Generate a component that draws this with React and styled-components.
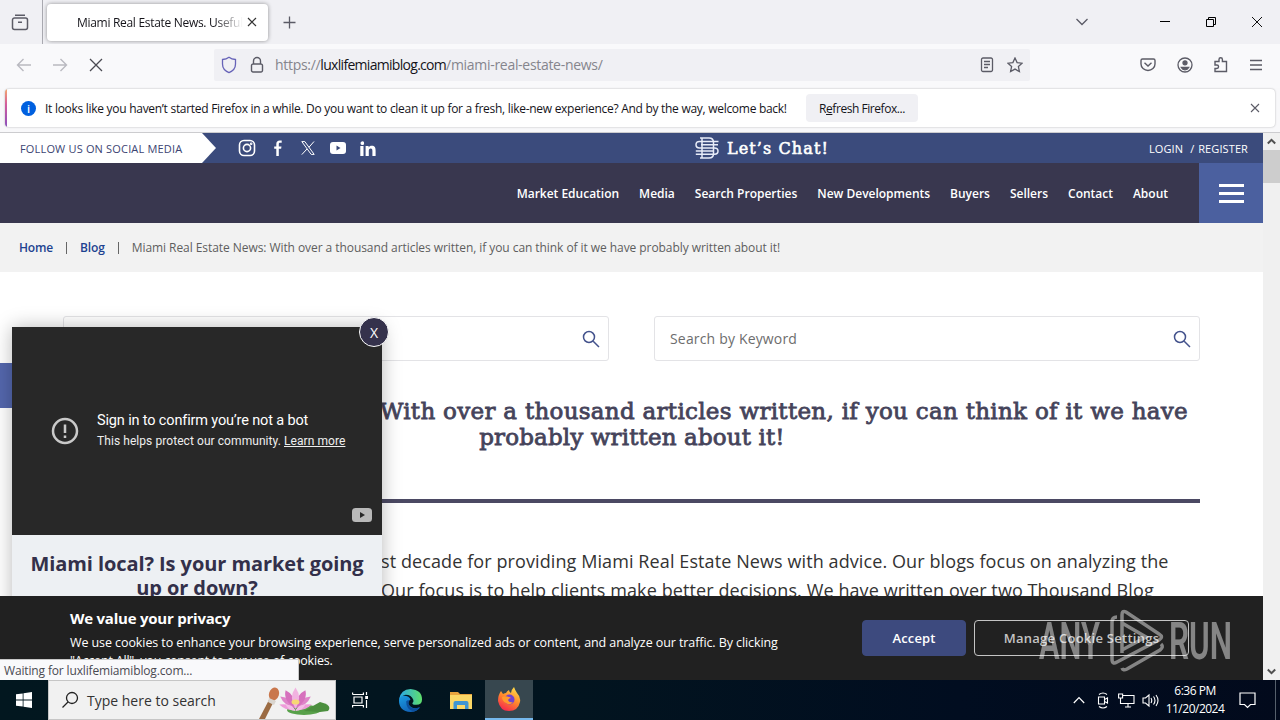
import { useState } from "react";
import styled, { createGlobalStyle, css } from "styled-components";

const NAV = ["Market Education", "Media", "Search Properties", "New Developments", "Buyers", "Sellers", "Contact", "About"];

function TitleBar() {
    return (
        <TitleRow>
            <ViewButton>
                <Svg width="18" height="18" viewBox="0 0 18 18">
                    <path d="M4 2.2h10M3.5 5h11a2 2 0 0 1 2 2v7.500a2 2 0 0 1-2 2h-11a2 2 0 0 1-2-2V7a2 2 0 0 1 2-2zM7 9.200h4" />
                </Svg>
            </ViewButton>
            <BrowserTab>
                <TabTitle>Miami Real Estate News. Useful</TabTitle>
                <Svg width="10" height="10" viewBox="0 0 10 10" $color="#333" $w={1.2}>
                    <path d="M1 1l8 8M9 1l-8 8" />
                </Svg>
            </BrowserTab>
            <NewTab>
                <Svg width="13" height="13" viewBox="0 0 13 13" $w={1.3}>
                    <path d="M6.500 .5v12M.5 6.500h12" />
                </Svg>
            </NewTab>
            <WindowButtons>
                <Svg width="14" height="8" viewBox="0 0 14 8" $w={1.3}>
                    <path d="M1.500 1l5.500 5.500L12.500 1" />
                </Svg>
                <Svg width="10" height="10" viewBox="0 0 10 10" $color="#000" $w={1}>
                    <path d="M0 4.500h10" />
                </Svg>
                <Svg width="10" height="10" viewBox="0 0 10 10" $color="#000" $w={1}>
                    <path d="M.5 2.500h7v7h-7zM2.500 2.500v-2h7v7h-2" />
                </Svg>
                <Svg width="10" height="10" viewBox="0 0 10 10" $color="#111" $w={1}>
                    <path d="M0 0l10 10M10 0L0 10" />
                </Svg>
            </WindowButtons>
        </TitleRow>
    );
}

function ToolBar() {
    return (
        <ToolRow>
            <NavIcons>
                <Svg width="16" height="14" viewBox="0 0 16 14" $color="#b9b9c0" $w={1.4}>
                    <path d="M15 7H1.500M7.500 1l-6 6 6 6" />
                </Svg>
                <Svg width="16" height="14" viewBox="0 0 16 14" $color="#b9b9c0" $w={1.4}>
                    <path d="M1 7h13.500M8.500 1l6 6-6 6" />
                </Svg>
                <Svg width="16" height="14" viewBox="0 0 16 14" $color="#4a4a52" $w={1.3}>
                    <path d="M2 1l12 12M14 1L2 13" />
                </Svg>
            </NavIcons>
            <UrlBar>
                <Svg width="16" height="18" viewBox="0 0 16 18" $color="#6763b8" $w={1.3}>
                    <path d="M8 1.200C6 2.700 4 3.300 1.500 3.500v4.500c0 4 2.500 7 6.500 8.600 4-1.600 6.500-4.600 6.500-8.600V3.500C12 3.300 10 2.700 8 1.200z" />
                </Svg>
                <Svg width="14" height="18" viewBox="0 0 14 18" $w={1.4}>
                    <path d="M3 8h8a1.500 1.500 0 0 1 1.500 1.500v5A1.500 1.500 0 0 1 11 16H3a1.500 1.500 0 0 1-1.500-1.500v-5A1.500 1.500 0 0 1 3 8zM3.500 8V5a3.500 3.500 0 0 1 7 0v3" />
                </Svg>
                <Url>
                    https://<b>luxlifemiamiblog.com</b>/miami-real-estate-news/
                </Url>
                <Svg width="14" height="16" viewBox="0 0 14 16" $w={1.3}>
                    <path d="M3 1h8a1.500 1.500 0 0 1 1.500 1.500v10.500A1.500 1.500 0 0 1 11 14.500H3A1.500 1.500 0 0 1 1.500 13V2.500A1.500 1.500 0 0 1 3 1zM4 4.500h6M4 7.500h6M4 10.500h4" />
                </Svg>
                <Svg width="16" height="16" viewBox="0 0 16 16" $w={1.3}>
                    <path d="M8 1l2.100 4.600 5 .6-3.700 3.400 1 4.900L8 12.100l-4.400 2.400 1-4.900L.9 6.200l5-.6z" />
                </Svg>
            </UrlBar>
            <ToolIcons>
                <Svg width="16" height="16" viewBox="0 0 16 16" $w={1.4}>
                    <path d="M2.500 2h11A1.500 1.500 0 0 1 15 3.500V7A7 6.500 0 0 1 1 7V3.500A1.500 1.500 0 0 1 2.500 2zM4.500 5.800L8 9l3.500-3.200" />
                </Svg>
                <Svg width="16" height="16" viewBox="0 0 16 16" $w={1.3}>
                    <circle cx="8" cy="8" r="7" />
                    <circle cx="8" cy="5.800" r="2" fill="#5b5b66" />
                    <path d="M4.300 10.500h7.400q-1.200 2.300-3.700 2.300t-3.700-2.300z" fill="#5b5b66" />
                </Svg>
                <Svg width="16" height="16" viewBox="0 0 16 16" $w={1.4}>
                    <path d="M2 4.500h4V2.500a1.700 1.700 0 0 1 3.400 0v2h4.100V14.500H2v-3h1.800a1.700 1.700 0 0 0 0-3.500H2z" />
                </Svg>
                <Svg width="14" height="12" viewBox="0 0 14 12" $w={1.3}>
                    <path d="M1 1.500h12M1 6h12M1 10.500h12" />
                </Svg>
            </ToolIcons>
        </ToolRow>
    );
}

function Notification() {
    return (
        <NoticeArea>
            <Notice>
                <InfoDot>i</InfoDot>
                <NoticeText>
                    It looks like you haven’t started Firefox in a while. Do you want to clean it up for a fresh, like-new experience? And by the way, welcome back!
                </NoticeText>
                <RefreshButton>
                    R<u>e</u>fresh Firefox...
                </RefreshButton>
                <Svg width="10" height="10" viewBox="0 0 10 10" $w={1.1}>
                    <path d="M1 1l8 8M9 1L1 9" />
                </Svg>
            </Notice>
        </NoticeArea>
    );
}

function SiteHeader() {
    return (
        <>
            <TopBar>
                <Follow>FOLLOW US ON SOCIAL MEDIA</Follow>
                <Socials>
                    <Svg width="18" height="18" viewBox="0 0 18 18" $color="#fff" $w={1.6}>
                        <rect x="1.500" y="1.500" width="15" height="15" rx="4.500" />
                        <circle cx="9" cy="9" r="3.600" />
                        <circle cx="13.200" cy="4.800" r=".5" />
                    </Svg>
                    <Svg width="10" height="16" viewBox="0 0 10 16" $color="none">
                        <path fill="#fff" d="M3.300 16V8.700H1.200V6.400h2.100V4c0-2.400 1.300-3.600 3.500-3.600l1.900.1v2.200H7.300C6.200 2.700 5.800 3.200 5.800 4v2.400h2.700l-.4 2.300H5.800V16z" />
                    </Svg>
                    <Svg width="14" height="14" viewBox="0 0 14 14" $color="#fff" $w={1}>
                        <path d="M.8.6h3l9.400 12.800h-3zM13 .5L8 6.200M6 8l-5.200 5.600" />
                    </Svg>
                    <Svg width="16" height="12" viewBox="0 0 16 12" $color="none">
                        <rect width="16" height="12" rx="3" fill="#fff" />
                        <path fill="#3b4a7a" d="M6.500 3.500v5L10.500 6z" />
                    </Svg>
                    <Svg width="16" height="15" viewBox="0 0 16 15" $color="none">
                        <path fill="#fff" d="M.3 5h3.200v10H.3zM1.900.4a1.800 1.800 0 1 1 0 3.500 1.800 1.800 0 0 1 0-3.500zM5.600 5h3v1.400c.6-1 1.700-1.700 3.100-1.700 3.100 0 3.900 2 3.900 4.800V15h-3.200v-4.900c0-1.300-.2-2.500-1.700-2.500s-1.900 1.100-1.900 2.500V15H5.600z" />
                    </Svg>
                </Socials>
                <Chat>
                    <Svg width="24" height="22" viewBox="0 0 24 22" $color="#e8ecf8" $w={1.5}>
                        <path d="M23.500 4.500H4.500Q1 4.500 1 7.700t3.500 3.200h15q3.500 0 3.500 3.200t-3.500 3.200H.8M.8 14h18M6 7.700h17M5 1h9q4.500 0 4.500 4.500v11q0 4.500-4.500 4.500H5M7 1v20" />
                    </Svg>
                    <span>Let’s Chat!</span>
                </Chat>
                <Login>
                    <span>LOGIN</span>
                    <span>/ REGISTER</span>
                </Login>
            </TopBar>
            <NavBar>
                {NAV.map((item) => (
                    <NavItem key={item}>{item}</NavItem>
                ))}
                <Burger>
                    <i />
                    <i />
                    <i />
                </Burger>
            </NavBar>
            <Crumbs>
                <CrumbLink>Home</CrumbLink>
                <CrumbSep />
                <CrumbLink>Blog</CrumbLink>
                <CrumbSep />
                <CrumbText>Miami Real Estate News: With over a thousand articles written, if you can think of it we have probably written about it!</CrumbText>
            </Crumbs>
        </>
    );
}

function SearchIcon() {
    return (
        <Svg width="18" height="18" viewBox="0 0 18 18" $color="#43528c" $w={1.5}>
            <circle cx="7" cy="7" r="5.500" />
            <path d="M11.200 11.200L17 17" />
        </Svg>
    );
}

function VideoPopup({ onClose }) {
    return (
        <Popup>
            <CloseButton onClick={onClose}>X</CloseButton>
            <Video>
                <VideoMessage>
                    <Svg width="28" height="28" viewBox="0 0 28 28" $color="#c9c9c9" $w={2.500}>
                        <circle cx="14" cy="14" r="12" />
                        <path d="M14 7.500v8.500M14 18.500v2.500" />
                    </Svg>
                    <div>
                        <VideoTitle>Sign in to confirm you’re not a bot</VideoTitle>
                        <VideoSub>
                            This helps protect our community. <u>Learn more</u>
                        </VideoSub>
                    </div>
                </VideoMessage>
                <YtMark>
                    <Svg width="20" height="14" viewBox="0 0 20 14" $color="none">
                        <rect width="20" height="14" rx="3.500" fill="#b9b9b9" />
                        <path fill="#282828" d="M8 4v6l5-3z" />
                    </Svg>
                </YtMark>
            </Video>
            <PopupTitle>
                Miami local? Is your market going
                <br />
                up or down?
            </PopupTitle>
        </Popup>
    );
}

function CookieBanner() {
    return (
        <Cookie>
            <CookieCopy>
                <CookieTitle>We value your privacy</CookieTitle>
                <CookieText $ls={-0.088}>
                    We use cookies to enhance your browsing experience, serve personalized ads or content, and analyze our traffic. By clicking
                </CookieText>
                <CookieText $ls={-0.19}>"Accept All", you consent to our use of cookies.</CookieText>
            </CookieCopy>
            <CookieButton $primary>Accept</CookieButton>
            <CookieButton>Manage Cookie Settings</CookieButton>
        </Cookie>
    );
}

function Watermark() {
    return (
        <WatermarkSvg width="200" height="64" viewBox="0 0 200 64">
            <g fill="#fff" fontFamily="Roboto, sans-serif" fontSize="52" fontWeight="600">
                <text x="1" y="50" textLength="61" lengthAdjust="spacingAndGlyphs">ANY</text>
                <text x="131" y="50" textLength="63" lengthAdjust="spacingAndGlyphs">RUN</text>
            </g>
            <path
                d="M79 8q-5 0-5 5v37q0 6 5 3l42-22q5-3 0-6L88 3q-4-2-4 3v38M84 14l24 14-24 13M84 59q1 3 5 1l33-19q4-3 1-6"
                fill="none"
                stroke="#fff"
                strokeWidth="3.500"
            />
        </WatermarkSvg>
    );
}

function TaskBar() {
    return (
        <Tasks>
            <TaskButton>
                <Svg width="16" height="16" viewBox="0 0 16 16" $color="none">
                    <path fill="#fff" d="M0 2.300L6.700 1.400v6.200H0zM7.500 1.300L16 0v7.600H7.500zM0 8.400h6.700v6.200L0 13.700zM7.500 8.400H16V16l-8.500-1.300z" />
                </Svg>
            </TaskButton>
            <TaskSearch>
                <Svg width="18" height="18" viewBox="0 0 18 18" $color="#222" $w={1.3}>
                    <circle cx="11" cy="7" r="5.500" />
                    <path d="M7 11l-5.500 5.500" />
                </Svg>
                <span>Type here to search</span>
                <Svg width="72" height="38" viewBox="0 0 72 38" $color="none">
                    <path d="M16 18L6 38H0L11 17z" fill="#9b6b43" />
                    <ellipse cx="15" cy="13" rx="5" ry="6.500" transform="rotate(18 15 13)" fill="#c9774c" />
                    <path d="M10 17l7 3-2 4-6-3z" fill="#d9d5cf" />
                    <ellipse cx="45" cy="29" rx="17" ry="5" fill="#58a14a" />
                    <path d="M45 30l16-9q13 3 8 9l-8 1z" fill="#4b8f3e" />
                    <g fill="#df84c9" transform="translate(.5 2) scale(.9)">
                        <path d="M40 28q-13-3-17-13 12 1 17 13zM40 28q13-3 17-13-12 1-17 13z" />
                        <path d="M40 28Q26 20 29 8q11 5 11 20zM40 28q14-8 11-20-11 5-11 20z" fill="#d670bd" />
                        <path d="M40 29q-8-13 0-24 8 11 0 24z" fill="#f1b2e0" />
                        <path d="M40 30q-11 1-18-6 11-2 18 6zM40 30q11 1 18-6-11-2-18 6z" fill="#ee9bd9" />
                        <path d="M40 31q-8 0-11-7 8 0 11 7zM40 31q8 0 11-7-8 0-11 7z" fill="#f4bce6" />
                    </g>
                    <ellipse cx="36.500" cy="21" rx="4" ry="2.500" fill="#f7d774" />
                </Svg>
            </TaskSearch>
            <TaskButton>
                <Svg width="17" height="16" viewBox="0 0 17 16" $color="#fff" $w={1.2}>
                    <path d="M.6 2.500V.6M.6 2.500h10.800V.6M2 5h8v6H2zM.6 15.500v-2h10.800v2M14.500 0v3M14.500 8v8" />
                    <path d="M13.200 4h2.800v3h-2.800z" fill="#fff" stroke="none" />
                </Svg>
            </TaskButton>
            <TaskButton $wide>
                <Svg width="25" height="25" viewBox="0 0 26 26" $color="none">
                    <defs>
                        <linearGradient id="edgeTop" x1="0" x2="1">
                            <stop offset="0" stopColor="#2aa7e8" />
                            <stop offset="1" stopColor="#5fe06b" />
                        </linearGradient>
                        <linearGradient id="edgeBody" x1="0" y1="0" x2=".6" y2="1">
                            <stop offset="0" stopColor="#1b9de2" />
                            <stop offset="1" stopColor="#1160b5" />
                        </linearGradient>
                    </defs>
                    <path d="M1 13Q1 8 6 8q6 0 7 4-3 2-2 5 3 5 9 4l3-1q-3 5-10 5Q1 24 1 13z" fill="url(#edgeBody)" />
                    <path d="M1 12Q3 1 13 1q12 1 12 11 0 5.500-6 5.500-4.500 0-4-2 1.500-1 1-3Q14 7 8 7q-5 1-7 5z" fill="url(#edgeTop)" />
                    <path d="M8.500 14q0 9 8 10.500 4-1 6-4.500-8 3-11-1.500-1.500-3 .5-5.500-2-1-3.500 1z" fill="#0c4f9c" />
                </Svg>
            </TaskButton>
            <TaskButton>
                <Svg width="22" height="19" viewBox="0 0 22 19" $color="none">
                    <path d="M0 1h8l2 2h12v4H0z" fill="#e8a33d" />
                    <path d="M0 4h22v14H0z" fill="#fbd766" />
                    <path d="M3.500 18v-6q0-2 2-2h11q2 0 2 2v6H15v-4H7v4z" fill="#3f95d1" />
                </Svg>
            </TaskButton>
            <TaskButton $active>
                <Svg width="24" height="24" viewBox="0 0 24 24" $color="none">
                    <defs>
                        <linearGradient id="fox" x1=".8" y1="0" x2=".3" y2="1">
                            <stop offset="0" stopColor="#ffe14a" />
                            <stop offset=".5" stopColor="#ff8a2c" />
                            <stop offset="1" stopColor="#f5274e" />
                        </linearGradient>
                    </defs>
                    <path d="M4 4l2 3q2-1 3-1 1-2 3-3 0 2 2 3 0-3 3-6 1 3 3 6 4 4 3 9-2 9-11 9T1 14Q1 8 4 4z" fill="url(#fox)" />
                    <circle cx="12.500" cy="12.500" r="5" fill="#7142cf" />
                    <path d="M5 10q4-2 9 1-2 0-3 2 1 3 5 2-3 4-7 1-4-2-4-6z" fill="#ff9a2e" />
                </Svg>
            </TaskButton>
            <Tray>
                <Svg width="12" height="8" viewBox="0 0 12 8" $color="#fff" $w={1.2}>
                    <path d="M.8 7L6 1.500 11.200 7" />
                </Svg>
                <Svg width="12" height="17" viewBox="0 0 12 17" $color="#fff" $w={1.1}>
                    <path d="M1.500 5h6v7h-6zM7.500 7.500L10.500 6v5l-3-1.500M2 2.500q4-3 8 0M2 14.500q4 3 8 0" />
                </Svg>
                <Svg width="17" height="15" viewBox="0 0 17 15" $color="#fff" $w={1.1}>
                    <path d="M5 2.500h11v8H5M10 10.500V14M7 14h6M.6 1h4v4h-4zM2.500 5v5.500h3" />
                </Svg>
                <Svg width="17" height="15" viewBox="0 0 17 15" $color="#fff" $w={1.1}>
                    <path d="M1 5h2.500L7 2v11l-3.500-3H1zM9 5q1.500 2.500 0 5M11.500 3.500q3 4 0 8M14 2q4 5.500 0 11" />
                </Svg>
            </Tray>
            <Clock>
                <span>6:36 PM</span>
                <span>11/20/2024</span>
            </Clock>
            <Svg width="17" height="17" viewBox="0 0 17 17" $color="#fff" $w={1.2}>
                <path d="M1 1h15v11.500h-4.500L8.500 15.500l-3-3H1z" />
            </Svg>
            <DesktopEdge />
        </Tasks>
    );
}

function App() {
    const [popupOpen, setPopupOpen] = useState(true);

    return (
        <Screen>
            <GlobalStyle />
            <TitleBar />
            <ToolBar />
            <Notification />
            <Viewport>
                <Page>
                    <SiteHeader />
                    <Content>
                        <SearchRow>
                            <SearchField>
                                <span />
                                <SearchIcon />
                            </SearchField>
                            <SearchField>
                                <span>Search by Keyword</span>
                                <SearchIcon />
                            </SearchField>
                        </SearchRow>
                        <Heading>
                            <HeadingLine $right>With over a thousand articles written, if you can think of it we have</HeadingLine>
                            <HeadingLine>probably written about it!</HeadingLine>
                        </Heading>
                        <Article>
                            <ArticleLine>st decade for providing Miami Real Estate News with advice. Our blogs focus on analyzing the</ArticleLine>
                            <ArticleLine>Our focus is to help clients make better decisions. We have written over two Thousand Blog</ArticleLine>
                        </Article>
                    </Content>
                    <SideTab />
                    {popupOpen && <VideoPopup onClose={() => setPopupOpen(false)} />}
                    <CookieBanner />
                    <Watermark />
                    <StatusBar>Waiting for luxlifemiamiblog.com...</StatusBar>
                </Page>
                <ScrollBar>
                    <Svg width="9" height="17" viewBox="0 0 9 17" $color="#505050" $w={2}>
                        <path d="M.8 10.500l3.700-3.700 3.700 3.700" />
                    </Svg>
                    <Thumb />
                    <Svg width="9" height="17" viewBox="0 0 9 17" $color="#505050" $w={2}>
                        <path d="M.8 6.500l3.700 3.700 3.700-3.700" />
                    </Svg>
                </ScrollBar>
            </Viewport>
            <TaskBar />
        </Screen>
    );
}

export default App;

const GlobalStyle = createGlobalStyle`
    * {
        box-sizing: border-box;
    }

    body {
        margin: 0;
        overflow: hidden;
        font-family: "Open Sans", "Noto Sans", sans-serif;
    }
`;

const Svg = styled.svg`
    flex: none;
    display: block;
    fill: none;
    stroke: ${(props) => props.$color || "#5b5b66"};
    stroke-width: ${(props) => props.$w || 1.5};
`;

const Screen = styled.div`
    display: flex;
    flex-direction: column;
    width: 1280px;
    height: 720px;
    overflow: hidden;
    white-space: nowrap;
`;

const TitleRow = styled.div`
    display: flex;
    align-items: center;
    height: 44px;
    background: #f0f0f4;
`;

const ViewButton = styled.div`
    display: flex;
    align-items: center;
    width: 43px;
    height: 44px;
    padding-left: 11px;
    border-right: 1px solid #a9a9b0;
`;

const BrowserTab = styled.div`
    display: flex;
    align-items: center;
    justify-content: space-between;
    width: 221px;
    height: 37px;
    margin-left: 4px;
    padding: 0 11px 0 30px;
    background: #fff;
    border-radius: 4px;
    box-shadow: 0 0 4px rgba(0, 0, 0, 0.4);
`;

const TabTitle = styled.span`
    width: 166px;
    overflow: hidden;
    font-size: 12px;
    letter-spacing: -0.3px;
    color: #15141a;
    mask-image: linear-gradient(to left, transparent, #000 28px);
`;

const NewTab = styled.div`
    padding-left: 15px;
`;

const WindowButtons = styled.div`
    display: flex;
    align-items: center;
    gap: 36px;
    margin-left: auto;
    padding-right: 18px;

    svg:first-child {
        margin-right: 35px;
    }
`;

const ToolRow = styled.div`
    display: flex;
    align-items: center;
    height: 44px;
    padding-bottom: 3px;
    background: #f9f9fb;
`;

const NavIcons = styled.div`
    display: flex;
    align-items: center;
    gap: 20px;
    width: 214px;
    padding-left: 16px;
`;

const UrlBar = styled.div`
    display: flex;
    align-items: center;
    width: 816px;
    height: 32px;
    padding: 0 7px;
    background: #f0f0f4;
    border-radius: 2px;

    svg:nth-child(2) {
        margin-left: 13px;
    }

    svg:last-child {
        margin-left: 13px;
    }
`;

const Url = styled.span`
    flex: 1;
    margin-left: 11px;
    font-size: 14px;
    letter-spacing: -0.3px;
    color: #85858d;

    b {
        font-weight: 400;
        letter-spacing: -0.7px;
        color: #15141a;
    }
`;

const ToolIcons = styled.div`
    display: flex;
    align-items: center;
    gap: 20px;
    margin-left: auto;
    padding-right: 17px;

    svg:first-child {
        margin-right: 1px;
    }
`;

const NoticeArea = styled.div`
    height: 45px;
    padding: 1px 5px 0;
    background: #f8f8fa;
    border-bottom: 1px solid #cccccf;
`;

const Notice = styled.div`
    display: flex;
    align-items: center;
    height: 38px;
    padding-right: 15px;
    background: linear-gradient(#f5a86c, #d35c9c 40%, #8a4fbd) left / 2px 100% no-repeat #fff;
    border-radius: 4px;
    box-shadow: 0 0 2px rgba(0, 0, 0, 0.3);

    > svg {
        margin-left: auto;
    }
`;

const InfoDot = styled.span`
    width: 15px;
    height: 15px;
    margin-left: 16px;
    border-radius: 50%;
    background: #0060df;
    color: #fff;
    font-size: 11px;
    font-weight: 600;
    line-height: 15px;
    text-align: center;
`;

const NoticeText = styled.span`
    width: 761px;
    margin-left: 9px;
    padding-top: 1px;
    font-size: 12px;
    letter-spacing: -0.284px;
    color: #15141a;
`;

const RefreshButton = styled.span`
    width: 112px;
    height: 28px;
    background: #f0f0f4;
    border-radius: 4px;
    font-size: 12px;
    letter-spacing: -0.45px;
    line-height: 30px;
    text-align: center;
    color: #15141a;
`;

const Viewport = styled.div`
    display: flex;
    height: 547px;
`;

const Page = styled.div`
    position: relative;
    width: 1263px;
    height: 547px;
    overflow: hidden;
    background: #fff;
`;

const TopBar = styled.div`
    display: flex;
    align-items: center;
    height: 30px;
    padding-right: 15px;
    background: #3b4b7c;
    color: #fff;
`;

const Follow = styled.div`
    width: 216px;
    height: 30px;
    padding-left: 20px;
    background: #fff;
    clip-path: polygon(0 0, 202px 0, 216px 15px, 202px 100%, 0 100%);
    font-size: 11px;
    letter-spacing: 0.17px;
    line-height: 32px;
    color: #3b4472;
`;

const Socials = styled.div`
    display: flex;
    align-items: center;
    width: 479px;
    padding-left: 22px;

    svg:nth-child(2) {
        margin-left: 17px;
    }

    svg:nth-child(3) {
        margin-left: 18px;
    }

    svg:nth-child(4) {
        margin-left: 15px;
    }

    svg:nth-child(5) {
        margin-left: 14px;
    }
`;

const Chat = styled.div`
    display: flex;
    align-items: center;
    gap: 8px;
    font-family: "DejaVu Serif", serif;
    font-size: 16px;
    letter-spacing: 1.1px;
    -webkit-text-stroke: 0.6px #fff;
`;

const Login = styled.div`
    display: flex;
    gap: 7px;
    margin-left: auto;
    font-size: 11px;
    letter-spacing: 0.1px;
    word-spacing: 1px;
`;

const NavBar = styled.div`
    display: flex;
    align-items: center;
    justify-content: flex-end;
    gap: 20px;
    height: 60px;
    background: #39374f;
`;

const NavItem = styled.span`
    font-size: 12px;
    font-weight: 600;
    letter-spacing: -0.01px;
    color: #fff;
`;

const Burger = styled.div`
    display: flex;
    flex-direction: column;
    align-items: center;
    justify-content: center;
    gap: 5px;
    width: 64px;
    height: 60px;
    margin-left: 11px;
    background: #4b609f;

    i {
        width: 25px;
        height: 3px;
        background: #fff;
    }
`;

const Crumbs = styled.div`
    display: flex;
    align-items: center;
    height: 49px;
    padding-left: 19px;
    background: #f2f2f2;
    font-size: 12px;
`;

const CrumbLink = styled.span`
    font-weight: 600;
    letter-spacing: -0.15px;
    color: #1d4290;
`;

const CrumbSep = styled.i`
    width: 1px;
    height: 12px;
    margin: 0 13px;
    background: #666;
`;

const CrumbText = styled.span`
    color: #5e5e5e;
    letter-spacing: -0.065px;
`;

const Content = styled.div`
    padding: 44px 63px 0;
`;

const SearchRow = styled.div`
    display: grid;
    grid-template-columns: 546px 546px;
    gap: 45px;
`;

const SearchField = styled.div`
    display: flex;
    align-items: center;
    justify-content: space-between;
    height: 45px;
    padding: 0 8px 0 15px;
    border: 1px solid #e3e3e6;
    border-radius: 3px;
    font-size: 14px;
    letter-spacing: 0.17px;
    color: #6d6d6d;
`;

const Heading = styled.h1`
    height: 142px;
    margin: 0;
    padding-top: 37px;
    border-bottom: 4px solid #4b4963;
    font-family: "DejaVu Serif", serif;
    font-size: 23px;
    font-weight: 400;
    line-height: 26px;
    color: #45435a;
    -webkit-text-stroke: 0.8px #45435a;
`;

const HeadingLine = styled.div`
    padding-left: ${(props) => (props.$right ? 0 : 1)}px;
    padding-right: ${(props) => (props.$right ? 12 : 0)}px;
    text-align: ${(props) => (props.$right ? "right" : "center")};
    letter-spacing: ${(props) => (props.$right ? 0.29 : 0.13)}px;
`;

const Article = styled.div`
    padding: 44px 0 0 318px;
`;

const ArticleLine = styled.p`
    margin: 0;
    font-size: 18px;
    line-height: 29px;
    letter-spacing: 0.095px;
    color: #333;
`;

const SideTab = styled.div`
    position: absolute;
    left: 0;
    top: 230px;
    width: 20px;
    height: 45px;
    background: #5467ad;
`;

const Popup = styled.div`
    position: absolute;
    left: 12px;
    top: 194px;
    width: 370px;
    height: 340px;
    background: #edf0f3;
    box-shadow: 0 0 18px rgba(0, 0, 0, 0.28);
`;

const CloseButton = styled.button`
    position: absolute;
    right: -7px;
    top: -10px;
    width: 30px;
    height: 30px;
    padding: 0;
    border: 1px solid #fff;
    border-radius: 50%;
    background: #35324c;
    color: #fff;
    font-family: "Open Sans", sans-serif;
    font-size: 14px;
`;

const Video = styled.div`
    display: flex;
    flex-direction: column;
    justify-content: space-between;
    height: 208px;
    padding: 83px 10px 13px 39px;
    background: #282828;
`;

const VideoMessage = styled.div`
    display: flex;
    align-items: center;
    gap: 18px;
    font-family: Roboto, sans-serif;
    color: #fff;
`;

const VideoTitle = styled.div`
    font-size: 14.5px;
    line-height: 22px;
    letter-spacing: -0.15px;
`;

const VideoSub = styled.div`
    font-size: 12px;
    line-height: 19px;
    letter-spacing: 0.07px;
    color: #eee;
`;

const YtMark = styled.div`
    display: flex;
    justify-content: flex-end;
`;

const PopupTitle = styled.div`
    padding-top: 17px;
    font-size: 20px;
    font-weight: 700;
    line-height: 24px;
    letter-spacing: -0.08px;
    text-align: center;
    color: #33304a;
`;

const Cookie = styled.div`
    position: absolute;
    left: 0;
    right: 0;
    bottom: 0;
    display: flex;
    height: 84px;
    padding: 12px 0 0 70px;
    background: #212121;
    color: #fff;
`;

const CookieCopy = styled.div`
    width: 792px;
`;

const CookieTitle = styled.div`
    font-size: 15px;
    font-weight: 700;
    line-height: 20px;
    letter-spacing: -0.23px;
    margin-bottom: 6px;
`;

const CookieText = styled.div`
    font-size: 12.5px;
    line-height: 18px;
    letter-spacing: ${(props) => props.$ls || 0}px;
`;

const CookieButton = styled.div`
    width: 215px;
    height: 36px;
    margin-top: 12px;
    border: 1px solid #c4c4c4;
    border-radius: 4px;
    font-size: 13px;
    font-weight: 600;
    line-height: 34px;
    letter-spacing: 0.26px;
    text-align: center;
    color: #c4c4c4;

    ${(props) =>
        props.$primary &&
        css`
            width: 104px;
            margin-right: 8px;
            border-color: #3d4a7e;
            background: #3d4a7e;
            color: #fff;
            letter-spacing: 0.15px;
        `}
`;

const WatermarkSvg = styled.svg`
    position: absolute;
    left: 1038px;
    top: 476px;
    overflow: visible;
    opacity: 0.45;
`;

const StatusBar = styled.div`
    position: absolute;
    left: 0;
    bottom: 0;
    width: 299px;
    height: 21px;
    padding-left: 4px;
    border-top: 1px solid #c8c8c8;
    border-right: 1px solid #c8c8c8;
    background: #f9f9fb;
    font-size: 12px;
    line-height: 22px;
    letter-spacing: -0.15px;
    color: #4a4a52;
`;

const ScrollBar = styled.div`
    display: flex;
    flex-direction: column;
    align-items: center;
    width: 17px;
    background: #f0f0f0;

    svg:last-child {
        margin-top: auto;
    }
`;

const Thumb = styled.div`
    width: 17px;
    height: 33px;
    background: #cdcdcd;
`;

const Tasks = styled.div`
    display: flex;
    align-items: center;
    height: 40px;
    background: linear-gradient(90deg, #02171f, #02141f 45%, #010d20 75%, #020a1c);
`;

const TaskButton = styled.div`
    display: flex;
    align-items: center;
    justify-content: center;
    width: ${(props) => (props.$wide ? 53 : 48)}px;
    height: 40px;

    ${(props) =>
        props.$active &&
        css`
            background: #37474f;
            border-bottom: 2px solid #76b9ed;
        `}
`;

const TaskSearch = styled.div`
    display: flex;
    align-items: center;
    width: 288px;
    height: 40px;
    padding: 0 4px 0 12px;
    border: 1px solid #c6c6c6;
    background: #f1f1f1;
    font-size: 14px;
    color: #333;

    span {
        flex: 1;
        margin-left: 8px;
    }
`;

const Tray = styled.div`
    display: flex;
    align-items: center;
    gap: 9px;
    margin-left: auto;

    svg:first-child {
        margin-right: 3px;
    }

    svg:last-child {
        margin-left: -2px;
    }
`;

const Clock = styled.div`
    display: flex;
    flex-direction: column;
    align-items: center;
    width: 72px;
    font-size: 12px;
    line-height: 18px;
    letter-spacing: -0.5px;
    color: #fff;

    & + svg {
        margin-left: 8px;
    }
`;

const DesktopEdge = styled.div`
    width: 20px;
    height: 40px;
    border-right: 1px solid #56606c;
    margin-right: 4px;
`;
